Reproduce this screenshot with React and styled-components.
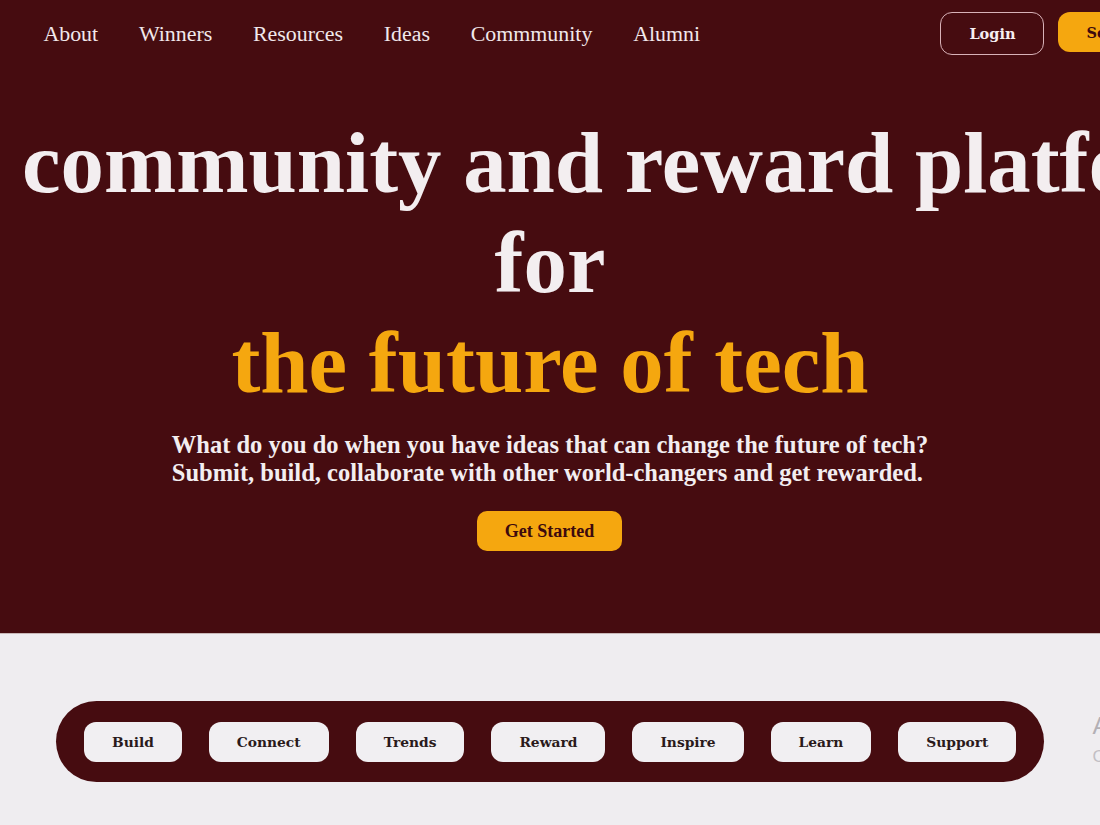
import React from "react";
import styled, { createGlobalStyle } from "styled-components";

const GlobalStyle = createGlobalStyle`
  html, body {
    margin: 0;
    padding: 0;
    background: #efedf0;
    overflow-x: hidden;
  }
  * { box-sizing: border-box; }
`;

const Page = styled.div`
  width: 100%;
  min-height: 825px;
  overflow: hidden;
  background: #efedf0;
`;

const Hero = styled.section`
  background: #460c10;
  padding-bottom: 82px;
  border-bottom: 1px solid #c9b8b8;
`;

const Header = styled.header`
  display: flex;
  align-items: flex-start;
  padding: 12px 0 0 23px;
  height: 67px;
  white-space: nowrap;
`;

const NavList = styled.nav`
  display: flex;
  align-items: center;
  height: 43px;
`;

const NavLink = styled.a`
  font-family: "Liberation Serif", "Times New Roman", serif;
  font-size: 21.9px;
  color: #f1e8eb;
  padding: 0 20.4px;
  text-decoration: none;
  cursor: pointer;
`;

const Actions = styled.div`
  display: flex;
  align-items: flex-start;
  gap: 14px;
  margin-left: 220px;
  flex-shrink: 0;
`;

const HeaderButton = styled.button`
  font-family: "DejaVu Serif", Georgia, serif;
  font-weight: 700;
  font-size: 14.5px;
  height: ${(p) => (p.$primary ? "40px" : "43px")};
  padding: 0 28px;
  border-radius: 12px;
  cursor: pointer;
  color: ${(p) => (p.$primary ? "#3d0a0e" : "#f6eef0")};
  background: ${(p) => (p.$primary ? "#f5a70f" : "transparent")};
  border: ${(p) => (p.$primary ? "none" : "1.5px solid #d8b2b8")};
`;

const Headline = styled.h1`
  margin: 46px 0 0;
  padding: 0 22px;
  text-align: center;
  font-family: "Liberation Serif", "Times New Roman", serif;
  font-weight: 700;
  font-size: 86.8px;
  line-height: 100px;
  color: #f3eef0;
`;

const HeadLine = styled.span`
  display: block;
  white-space: nowrap;
  color: ${(p) => (p.$accent ? "#f5a70f" : "#f3eef0")};
`;

const Subtitle = styled.p`
  width: fit-content;
  margin: 18px auto 0;
  text-align: left;
  font-family: "Liberation Serif", "Times New Roman", serif;
  font-weight: 700;
  font-size: 24.5px;
  line-height: 28px;
  color: #f3eef0;
`;

const CtaRow = styled.div`
  display: flex;
  justify-content: center;
  margin-top: 24px;
`;

const CtaButton = styled.button`
  width: 145px;
  height: 40px;
  border: none;
  border-radius: 10px;
  background: #f5a70f;
  color: #3d0a0e;
  font-family: "Liberation Serif", "Times New Roman", serif;
  font-weight: 700;
  font-size: 18px;
  cursor: pointer;
  margin-left: -1px;
`;

const Features = styled.section`
  display: flex;
  align-items: center;
  gap: 48px;
  padding: 67px 0 0 56px;
  white-space: nowrap;
`;

const PillBar = styled.div`
  display: flex;
  align-items: center;
  gap: 27px;
  height: 81px;
  padding: 0 28px;
  border-radius: 41px;
  background: #460c10;
  flex-shrink: 0;
`;

const Pill = styled.button`
  height: 40px;
  padding: 0 28px;
  border: none;
  border-radius: 12px;
  background: #f1eff2;
  color: #2a1a1b;
  font-family: "DejaVu Serif", Georgia, serif;
  font-weight: 700;
  font-size: 13.8px;
  cursor: pointer;
`;

const SideText = styled.div`
  display: flex;
  flex-direction: column;
  gap: 8px;
  flex-shrink: 0;
  font-family: "Liberation Sans", Arial, sans-serif;
  color: #b3b0b5;
  margin-top: -4px;
`;

const SideTitle = styled.span`
  font-size: 24px;
  line-height: 26px;
`;

const SideSub = styled.span`
  font-size: 17px;
  line-height: 20px;
  color: #c2bfc4;
`;

const links = ["About", "Winners", "Resources", "Ideas", "Commmunity", "Alumni"];
const pills = ["Build", "Connect", "Trends", "Reward", "Inspire", "Learn", "Support"];

export default function App() {
  return (
    <Page>
      <GlobalStyle />
      <Hero>
        <Header>
          <NavList>
            {links.map((l) => (
              <NavLink key={l}>{l}</NavLink>
            ))}
          </NavList>
          <Actions>
            <HeaderButton>Login</HeaderButton>
            <HeaderButton $primary>Send Idea</HeaderButton>
          </Actions>
        </Header>
        <Headline>
          <HeadLine>community and reward platform</HeadLine>
          <HeadLine>for</HeadLine>
          <HeadLine $accent>the future of tech</HeadLine>
        </Headline>
        <Subtitle>
          What do you do when you have ideas that can change the future of tech?
          <br />
          Submit, build, collaborate with other world-changers and get rewarded.
        </Subtitle>
        <CtaRow>
          <CtaButton>Get Started</CtaButton>
        </CtaRow>
      </Hero>
      <Features>
        <PillBar>
          {pills.map((p) => (
            <Pill key={p}>{p}</Pill>
          ))}
        </PillBar>
        <SideText>
          <SideTitle>A community</SideTitle>
          <SideSub>Connect with builders</SideSub>
        </SideText>
      </Features>
    </Page>
  );
}
